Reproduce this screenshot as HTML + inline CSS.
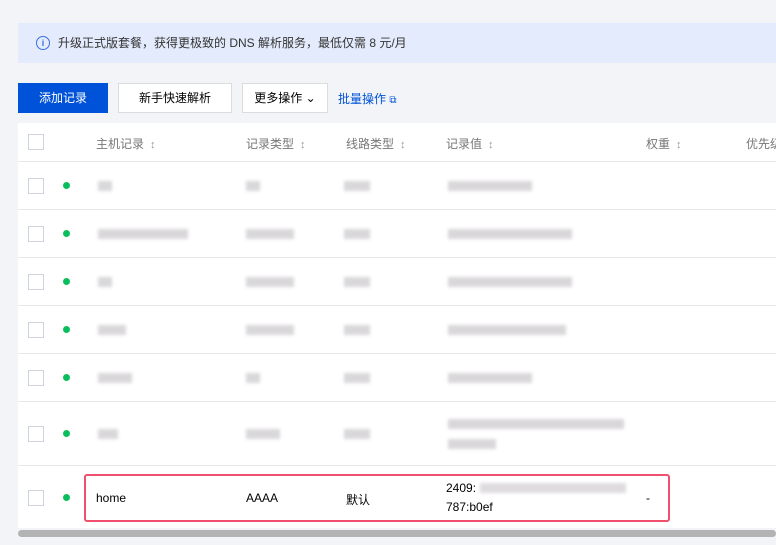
<!DOCTYPE html><html><head><meta charset="utf-8"><style>
*{margin:0;padding:0;box-sizing:border-box}
body{width:776px;height:545px;overflow:hidden;background:#f3f4f7;font-family:"Liberation Sans","Noto Sans CJK SC",sans-serif;font-size:12px;color:#000;position:relative}
.ban{position:absolute;left:18px;top:23px;width:758px;height:40px;background:#e3ebfc;color:#333;font-size:12px;line-height:40px;padding-left:40px}
.ban .i{position:absolute;left:18px;top:13px;width:14px;height:14px;border:1.3px solid #3d6fe0;border-radius:50%;color:#3d6fe0;font-size:9px;line-height:12px;text-align:center;font-weight:bold}
.btn{position:absolute;top:83px;height:30px;line-height:28px;text-align:center;border:1px solid #dcdcdc;background:#fff;font-size:12px;color:#000}
.tbl{position:absolute;left:18px;top:123px;width:758px;height:405px;background:#fff;overflow:hidden}
.row{position:absolute;left:0;width:758px;border-bottom:1px solid #e8e8e8}
.cb{position:absolute;left:10px;width:16px;height:16px;border:1px solid #cfd3db;background:#fff}
.dot{position:absolute;left:45px;width:7px;height:7px;border-radius:50%;background:#0abf5b}
.th{position:absolute;color:#777;font-size:12px;top:12px;white-space:nowrap}
.th b{font-weight:normal;color:#999;margin-left:6px;font-size:11px}
.bl{position:absolute;height:10px;background:#cfcdd0;filter:blur(1.5px);opacity:.8}
.t{position:absolute;font-size:12px}
</style></head><body>
<div class="ban"><span class="i">i</span>升级正式版套餐，获得更极致的 DNS 解析服务，最低仅需 8 元/月</div>
<div class="btn" style="left:18px;width:90px;background:#0052d9;border-color:#0052d9;color:#fff">添加记录</div>
<div class="btn" style="left:118px;width:114px">新手快速解析</div>
<div class="btn" style="left:242px;width:86px">更多操作 ⌄</div>
<div style="position:absolute;left:338px;top:90px;color:#0052d9;font-size:12px">批量操作 <span style="font-size:10px">⧉</span></div>
<div class="tbl">
<div class="row" style="top:0;height:39px"><div class="cb" style="top:11px"></div>
<div class="th" style="left:78px">主机记录<b>↕</b></div><div class="th" style="left:228px">记录类型<b>↕</b></div><div class="th" style="left:328px">线路类型<b>↕</b></div><div class="th" style="left:428px">记录值<b>↕</b></div><div class="th" style="left:628px">权重<b>↕</b></div><div class="th" style="left:728px">优先级</div></div>

<div class="row" style="top:39px;height:48px"><div class="cb" style="top:16px"></div><div class="dot" style="top:20px"></div><div class="bl" style="left:80px;top:19px;width:14px"></div><div class="bl" style="left:228px;top:19px;width:14px"></div><div class="bl" style="left:326px;top:19px;width:26px"></div><div class="bl" style="left:430px;top:19px;width:84px"></div></div>
<div class="row" style="top:87px;height:48px"><div class="cb" style="top:16px"></div><div class="dot" style="top:20px"></div><div class="bl" style="left:80px;top:19px;width:90px"></div><div class="bl" style="left:228px;top:19px;width:48px"></div><div class="bl" style="left:326px;top:19px;width:26px"></div><div class="bl" style="left:430px;top:19px;width:124px"></div></div>
<div class="row" style="top:135px;height:48px"><div class="cb" style="top:16px"></div><div class="dot" style="top:20px"></div><div class="bl" style="left:80px;top:19px;width:14px"></div><div class="bl" style="left:228px;top:19px;width:48px"></div><div class="bl" style="left:326px;top:19px;width:26px"></div><div class="bl" style="left:430px;top:19px;width:124px"></div></div>
<div class="row" style="top:183px;height:48px"><div class="cb" style="top:16px"></div><div class="dot" style="top:20px"></div><div class="bl" style="left:80px;top:19px;width:28px"></div><div class="bl" style="left:228px;top:19px;width:48px"></div><div class="bl" style="left:326px;top:19px;width:26px"></div><div class="bl" style="left:430px;top:19px;width:118px"></div></div>
<div class="row" style="top:231px;height:48px"><div class="cb" style="top:16px"></div><div class="dot" style="top:20px"></div><div class="bl" style="left:80px;top:19px;width:34px"></div><div class="bl" style="left:228px;top:19px;width:14px"></div><div class="bl" style="left:326px;top:19px;width:26px"></div><div class="bl" style="left:430px;top:19px;width:84px"></div></div>
<div class="row" style="top:279px;height:64px"><div class="cb" style="top:24px"></div><div class="dot" style="top:28px"></div><div class="bl" style="left:80px;top:27px;width:20px"></div><div class="bl" style="left:228px;top:27px;width:34px"></div><div class="bl" style="left:326px;top:27px;width:26px"></div><div class="bl" style="left:430px;top:17px;width:176px"></div><div class="bl" style="left:430px;top:37px;width:48px"></div></div>
<div class="row" style="top:343px;height:62px;border:none"><div class="cb" style="top:24px"></div><div class="dot" style="top:28px"></div>
<div style="position:absolute;left:66px;top:8px;width:586px;height:48px;border:2px solid #f0506e;border-radius:3px"></div>
<div class="t" style="left:78px;top:25px">home</div><div class="t" style="left:228px;top:25px">AAAA</div><div class="t" style="left:328px;top:25px">默认</div>
<div class="t" style="left:428px;top:15px">2409:</div><div class="bl" style="left:462px;top:17px;width:146px;background:#d5d3d6"></div><div class="t" style="left:428px;top:34px">787:b0ef</div><div class="t" style="left:628px;top:25px">-</div></div>
</div>
<div style="position:absolute;left:18px;top:530px;width:758px;height:7px;background:#b3b3b3;border-radius:4px"></div>
</body></html>
